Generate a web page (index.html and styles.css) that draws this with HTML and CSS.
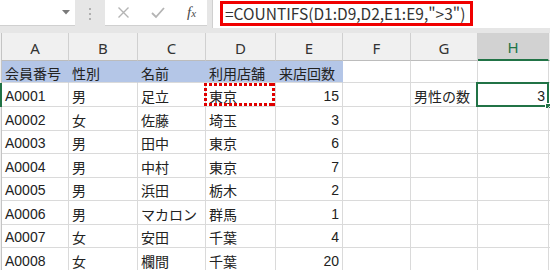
FILE: index.html
```html
<!DOCTYPE html>
<html lang="ja">
<head>
    <meta charset="UTF-8">
    <title>COUNTIFS</title>
    <link rel="stylesheet" href="styles.css">
</head>
<body>

<div class="toolbar">
    <div class="name-box">
        <span class="name-text">)</span>
        <svg class="caret" width="8" height="5" viewBox="0 0 8 5"><path d="M0 0H8L4 4.5Z" fill="#7a7a7a"/></svg>
    </div>
    <div class="grip"><i></i><i></i><i></i></div>
    <div class="fx-box">
        <svg width="13" height="13" viewBox="0 0 13 13"><path d="M1.5 1.5L11.5 11.5M11.5 1.5L1.5 11.5" stroke="#b4b4b4" stroke-width="1.4" fill="none"/></svg>
        <svg width="14" height="13" viewBox="0 0 14 13"><path d="M1 7L5 11L13 2" stroke="#b4b4b4" stroke-width="1.8" fill="none"/></svg>
        <span class="fx">f<small>x</small></span>
    </div>
    <div class="formula">
        <span class="formula-text">=COUNTIFS(D1:D9,D2,E1:E9,"&gt;3")</span>
    </div>
</div>

<div class="sheet">
    <div class="rh"></div>
    <div class="ch">A</div><div class="ch">B</div><div class="ch">C</div><div class="ch">D</div>
    <div class="ch">E</div><div class="ch">F</div><div class="ch">G</div><div class="ch active">H</div><div class="ch"></div>

    <div class="rh"></div>
    <div class="c hd">会員番号</div><div class="c hd">性別</div><div class="c hd">名前</div><div class="c hd">利用店舗</div><div class="c hd">来店回数</div>
    <div class="c"></div><div class="c"></div><div class="c"></div><div class="c"></div>

    <div class="rh active"></div>
    <div class="c">A0001</div><div class="c">男</div><div class="c">足立</div>
    <div class="c copied">東京<span class="marching"></span></div>
    <div class="c num">15</div><div class="c"></div><div class="c">男性の数</div>
    <div class="c num selected">3<span class="sel-box"><span class="handle"></span></span></div><div class="c"></div>

    <div class="rh"></div>
    <div class="c">A0002</div><div class="c">女</div><div class="c">佐藤</div><div class="c">埼玉</div><div class="c num">3</div>
    <div class="c"></div><div class="c"></div><div class="c"></div><div class="c"></div>

    <div class="rh"></div>
    <div class="c">A0003</div><div class="c">男</div><div class="c">田中</div><div class="c">東京</div><div class="c num">6</div>
    <div class="c"></div><div class="c"></div><div class="c"></div><div class="c"></div>

    <div class="rh"></div>
    <div class="c">A0004</div><div class="c">男</div><div class="c">中村</div><div class="c">東京</div><div class="c num">7</div>
    <div class="c"></div><div class="c"></div><div class="c"></div><div class="c"></div>

    <div class="rh"></div>
    <div class="c">A0005</div><div class="c">男</div><div class="c">浜田</div><div class="c">栃木</div><div class="c num">2</div>
    <div class="c"></div><div class="c"></div><div class="c"></div><div class="c"></div>

    <div class="rh"></div>
    <div class="c">A0006</div><div class="c">男</div><div class="c">マカロン</div><div class="c">群馬</div><div class="c num">1</div>
    <div class="c"></div><div class="c"></div><div class="c"></div><div class="c"></div>

    <div class="rh"></div>
    <div class="c">A0007</div><div class="c">女</div><div class="c">安田</div><div class="c">千葉</div><div class="c num">4</div>
    <div class="c"></div><div class="c"></div><div class="c"></div><div class="c"></div>

    <div class="rh"></div>
    <div class="c">A0008</div><div class="c">女</div><div class="c">欄間</div><div class="c">千葉</div><div class="c num">20</div>
    <div class="c"></div><div class="c"></div><div class="c"></div><div class="c"></div>
</div>

</body>
</html>
```

FILE: styles.css
```css
* {
    box-sizing: border-box;
}
body {
    margin: 0;
    width: 550px;
    height: 270px;
    overflow: hidden;
    background: #e6e6e6;
    font-family: "Liberation Sans", "Noto Sans CJK JP", sans-serif;
    color: #222;
}

/* formula bar */
.toolbar {
    display: flex;
    height: 28px;
    margin-bottom: 5px;
}
.name-box {
    width: 75px;
    height: 26px;
    background: #fff;
    border-bottom: 1px solid #d0d0d0;
    display: flex;
    align-items: center;
    justify-content: space-between;
    padding-right: 5px;
}
.name-text {
    margin-left: -5px;
    font-size: 14px;
    color: #3a4a7a;
}
.grip {
    width: 30px;
    display: flex;
    flex-direction: column;
    align-items: center;
    gap: 3px;
    padding-top: 8px;
}
.grip i {
    width: 2px;
    height: 2px;
    background: #b0b0b0;
}
.fx-box {
    width: 102px;
    height: 26px;
    background: #fff;
    border-bottom: 1px solid #d0d0d0;
    display: flex;
    align-items: center;
    padding-left: 12px;
    gap: 21px;
}
.fx {
    font-family: "Liberation Serif", serif;
    font-style: italic;
    font-size: 15px;
    color: #4a4a4a;
    margin-left: 1px;
}
.fx small {
    font-size: 11px;
}
.formula {
    flex: 1;
    margin-left: 5px;
    background: #fff;
    border-left: 1px solid #d0d0d0;
    padding: 1px 0 0 7px;
}
.formula-text {
    display: inline-block;
    height: 25px;
    border: 3px solid #f00000;
    padding: 0 5px 0 2px;
    font-family: "Noto Sans CJK JP", sans-serif;
    font-size: 15.5px;
    line-height: 18px;
    color: #333;
}

/* grid */
.sheet {
    display: grid;
    grid-template-columns: 2px 67px 69px 68px 70px 67px 68px 67px 71px 1fr;
    grid-template-rows: 28px 22px 24px 24px 23px 24px 23px 24px 23px 24px;
    background: #fff;
    font-size: 14px;
}
.rh {
    background: #f0f0f0;
    border-right: 1px solid #c4c4c4;
}
.rh.active {
    border-right: 2px solid #217346;
}
.ch {
    background: #f0f0f0;
    border-right: 1px solid #d0d0d0;
    border-bottom: 1px solid #bcbcbc;
    display: flex;
    align-items: center;
    justify-content: center;
    padding-top: 2px;
    color: #333;
    font-family: "Noto Sans", sans-serif;
    font-size: 15px;
}
.ch.active {
    background: #d2d2d2;
    border-bottom: 2px solid #217346;
    color: #217346;
}
.c {
    position: relative;
    border-right: 1px solid #dadada;
    border-bottom: 1px solid #dadada;
    display: flex;
    align-items: center;
    padding: 2px 3px 0 3px;
    white-space: nowrap;
}
.c.hd {
    background: #b4c6e7;
    border-right-color: #b4c6e7;
}
.c.num {
    justify-content: flex-end;
}
.marching {
    position: absolute;
    top: 0;
    left: -2px;
    right: 0;
    bottom: 0;
    background:
        repeating-linear-gradient(90deg, #e00000 0 3px, transparent 3px 5px) top / 100% 3px no-repeat,
        repeating-linear-gradient(90deg, #e00000 0 3px, transparent 3px 5px) bottom / 100% 3px no-repeat,
        repeating-linear-gradient(0deg, #e00000 0 3px, transparent 3px 5px) left / 3px 100% no-repeat,
        repeating-linear-gradient(0deg, #e00000 0 3px, transparent 3px 5px) right / 3px 100% no-repeat;
}
.sel-box {
    position: absolute;
    top: -1px;
    left: -2px;
    right: -1px;
    bottom: -1px;
    border: 2px solid #217346;
}
.handle {
    position: absolute;
    right: -4px;
    bottom: -4px;
    width: 6px;
    height: 6px;
    background: #217346;
    border: 1px solid #fff;
}
```
